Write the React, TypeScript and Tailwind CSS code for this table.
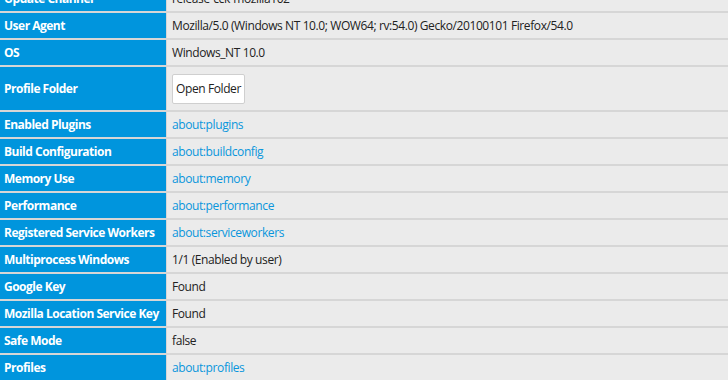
import type { ReactNode } from "react";

type Row = {
  label: string;
  value: ReactNode;
  tall?: boolean;
};

const link = (text: string) => <a className="text-[#0996dc]">{text}</a>;

const rows: Row[] = [
  { label: "Update Channel", value: "release-cck-mozilla102" },
  {
    label: "User Agent",
    value: "Mozilla/5.0 (Windows NT 10.0; WOW64; rv:54.0) Gecko/20100101 Firefox/54.0",
  },
  { label: "OS", value: "Windows_NT 10.0" },
  {
    label: "Profile Folder",
    tall: true,
    value: (
      <button className="h-[30px] rounded-[2px] border border-[#cfcfcf] bg-white px-[3px] text-[#222]">
        Open Folder
      </button>
    ),
  },
  { label: "Enabled Plugins", value: link("about:plugins") },
  { label: "Build Configuration", value: link("about:buildconfig") },
  { label: "Memory Use", value: link("about:memory") },
  { label: "Performance", value: link("about:performance") },
  { label: "Registered Service Workers", value: link("about:serviceworkers") },
  { label: "Multiprocess Windows", value: "1/1 (Enabled by user)" },
  { label: "Google Key", value: "Found" },
  { label: "Mozilla Location Service Key", value: "Found" },
  { label: "Safe Mode", value: "false" },
  { label: "Profiles", value: link("about:profiles") },
];

export default function App() {
  return (
    <div className="h-[380px] w-[728px] overflow-hidden bg-[#d6d6d6] font-['Open_Sans',sans-serif] text-[12px] tracking-[-0.4px]">
      <div className="-mt-[14px] grid grid-cols-[166px_1fr] gap-x-[1px] gap-y-[2px]">
        {rows.map((row) => (
          <div key={row.label} className="contents">
            <div
              className={`flex items-center whitespace-nowrap bg-[#0095dd] pl-[4px] font-bold tracking-[-0.5px] text-white ${
                row.tall ? "h-[43px]" : "h-[25px]"
              }`}
            >
              {row.label}
            </div>
            <div
              className={`flex items-center whitespace-nowrap bg-[#ebebeb] pl-[5px] text-[#222] ${
                row.tall ? "h-[43px]" : "h-[25px]"
              }`}
            >
              {row.value}
            </div>
          </div>
        ))}
      </div>
    </div>
  );
}
